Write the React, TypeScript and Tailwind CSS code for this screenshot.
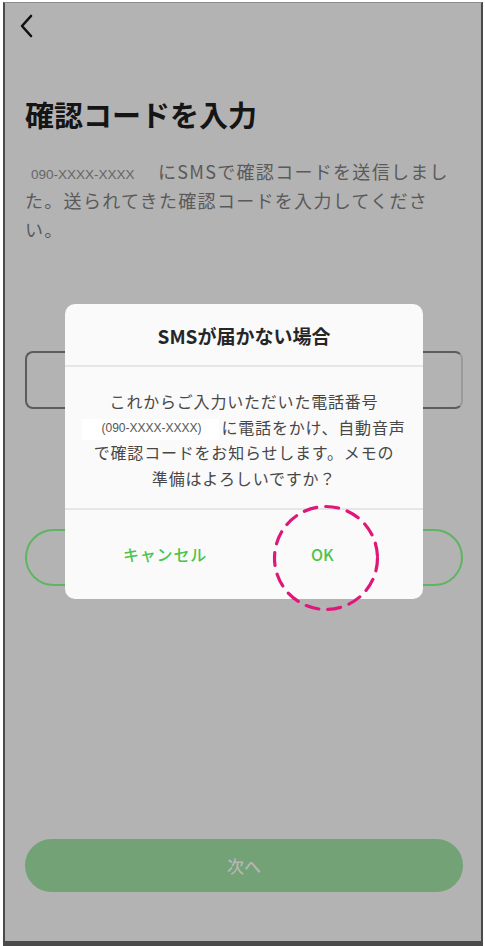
import React from 'react'

const jp = { fontFamily: '"Noto Sans CJK JP", "Noto Sans", sans-serif' }
const latin = { fontFamily: '"Liberation Sans", Arial, sans-serif' }

function BackIcon() {
  return (
    <svg width="20" height="26" viewBox="0 0 20 26" fill="none">
      <path d="M14 3 L5 13 L14 23" stroke="#111" strokeWidth="2.6" strokeLinecap="round" strokeLinejoin="round" />
    </svg>
  )
}

function Dialog() {
  return (
    <div className="absolute left-[60px] top-[301px] w-[358px] h-[295px] rounded-[10px] bg-[#fafafa] flex flex-col overflow-hidden">
      {/* Title */}
      <div className="h-[63px] flex items-center justify-center border-b-2 border-[#e6e6e6]">
        <span className="text-[19px] font-bold text-[#262626] pt-[4px]" style={jp}>SMSが届かない場合</span>
      </div>

      {/* Body */}
      <div className="h-[143px] flex items-center justify-center border-b-2 border-[#e6e6e6]">
        <p className="text-center text-[16px] leading-[25.5px] tracking-[0.8px] text-[#474747] pt-[5px]" style={jp}>
          これからご入力いただいた電話番号
          <br />
          <span className="inline-flex items-center w-[137px] h-[21px] bg-white pl-[19px] mr-[2px] align-middle text-[12px] tracking-normal text-[#555]" style={latin}>
            (090-XXXX-XXXX)
          </span>
          に電話をかけ、自動音声
          <br />
          で確認コードをお知らせします。メモの
          <br />
          準備はよろしいですか？
        </p>
      </div>

      {/* Actions */}
      <div className="flex-1 flex items-center pl-[58px] gap-[104px] pb-[2px]">
        <span className="text-[16px] font-medium tracking-[0.8px] text-[#4cc44c]" style={jp}>キャンセル</span>
        <span className="text-[16px] font-medium text-[#4cc44c]" style={jp}>OK</span>
      </div>
    </div>
  )
}

export default function App() {
  return (
    <div className="w-[485px] h-[946px] bg-white overflow-hidden">
      <div className="relative ml-[3px] mt-[2px] w-[480px] h-[944px] bg-[#b3b3b3] border-l-2 border-r-2 border-b-[5px] border-t border-[#4a4a4a] border-t-[#8c8c8c] flex flex-col pl-[20px] pr-[18px]">
        {/* Header */}
        <div className="h-[50px] -ml-[8px] pt-[10px]">
          <BackIcon />
        </div>

        <h1 className="mt-[41px] text-[29px] leading-[40px] font-bold text-[#151515]" style={jp}>
          確認コードを入力
        </h1>

        <p className="mt-[23px] text-[18px] leading-[29px] tracking-[1.3px] text-[#5a5a5a]" style={jp}>
          <span className="inline-block w-[133px] pl-[6px] text-[13.5px] leading-[20px] tracking-normal text-[#666]" style={latin}>
            090-XXXX-XXXX
          </span>
          にSMSで確認コードを送信しました。送られてきた確認コードを入力してください。
        </p>

        {/* Code input */}
        <div className="mt-[107px] h-[58px] rounded-[8px] border-2 border-[#5c5c5c] border-r-[#9a9a9a]" />

        {/* Outline button */}
        <div className="mt-[120px] h-[57px] rounded-full border-2 border-[#5fb463]" />

        {/* Next */}
        <div className="mt-auto mb-[49px] h-[53px] rounded-full bg-[#72a276] flex items-center justify-center">
          <span className="text-[17px] font-medium text-[#b6b6b6]" style={jp}>次へ</span>
        </div>

        <Dialog />

        {/* Highlight circle */}
        <svg className="absolute left-[266px] top-[500px]" width="110" height="110" viewBox="0 0 110 110">
          <circle cx="55" cy="55" r="51.5" fill="none" stroke="#e0177a" strokeWidth="3.2" strokeDasharray="13 9" strokeLinecap="round" />
        </svg>
      </div>
    </div>
  )
}
